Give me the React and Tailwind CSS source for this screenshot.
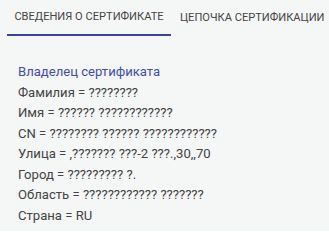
export default function App() {
  const rows = [
    "Фамилия = ????????",
    "Имя = ?????? ????????????",
    "CN = ???????? ?????? ????????????",
    "Улица = ,??????? ???-2 ???.,30,,70",
    "Город = ????????? ?.",
    "Область = ???????????? ???????",
    "Страна = RU",
  ];
  return (
    <div className="w-[329px] h-[231px] bg-[#f5f6f6] overflow-hidden" style={{ fontFamily: "Roboto, sans-serif" }}>
      <div className="flex pl-[7px]">
        <div className="w-[164px] h-[36px] flex items-center justify-center text-[11.1px] text-[#454545] border-b-2 border-[#3a44a0] pt-[1px]">
          СВЕДЕНИЯ О СЕРТИФИКАТЕ
        </div>
        <div className="h-[36px] flex items-center pl-[9px] text-[11.1px] text-[#454545] pt-[1px]">
          ЦЕПОЧКА СЕРТИФИКАЦИИ
        </div>
      </div>
      <div className="pl-[18px] pt-[26px] text-[13.1px] leading-[20.5px] text-[#444]">
        <div className="text-[#3f4fb0]">Владелец сертификата</div>
        {rows.map((r) => (
          <div key={r}>{r}</div>
        ))}
      </div>
    </div>
  );
}
